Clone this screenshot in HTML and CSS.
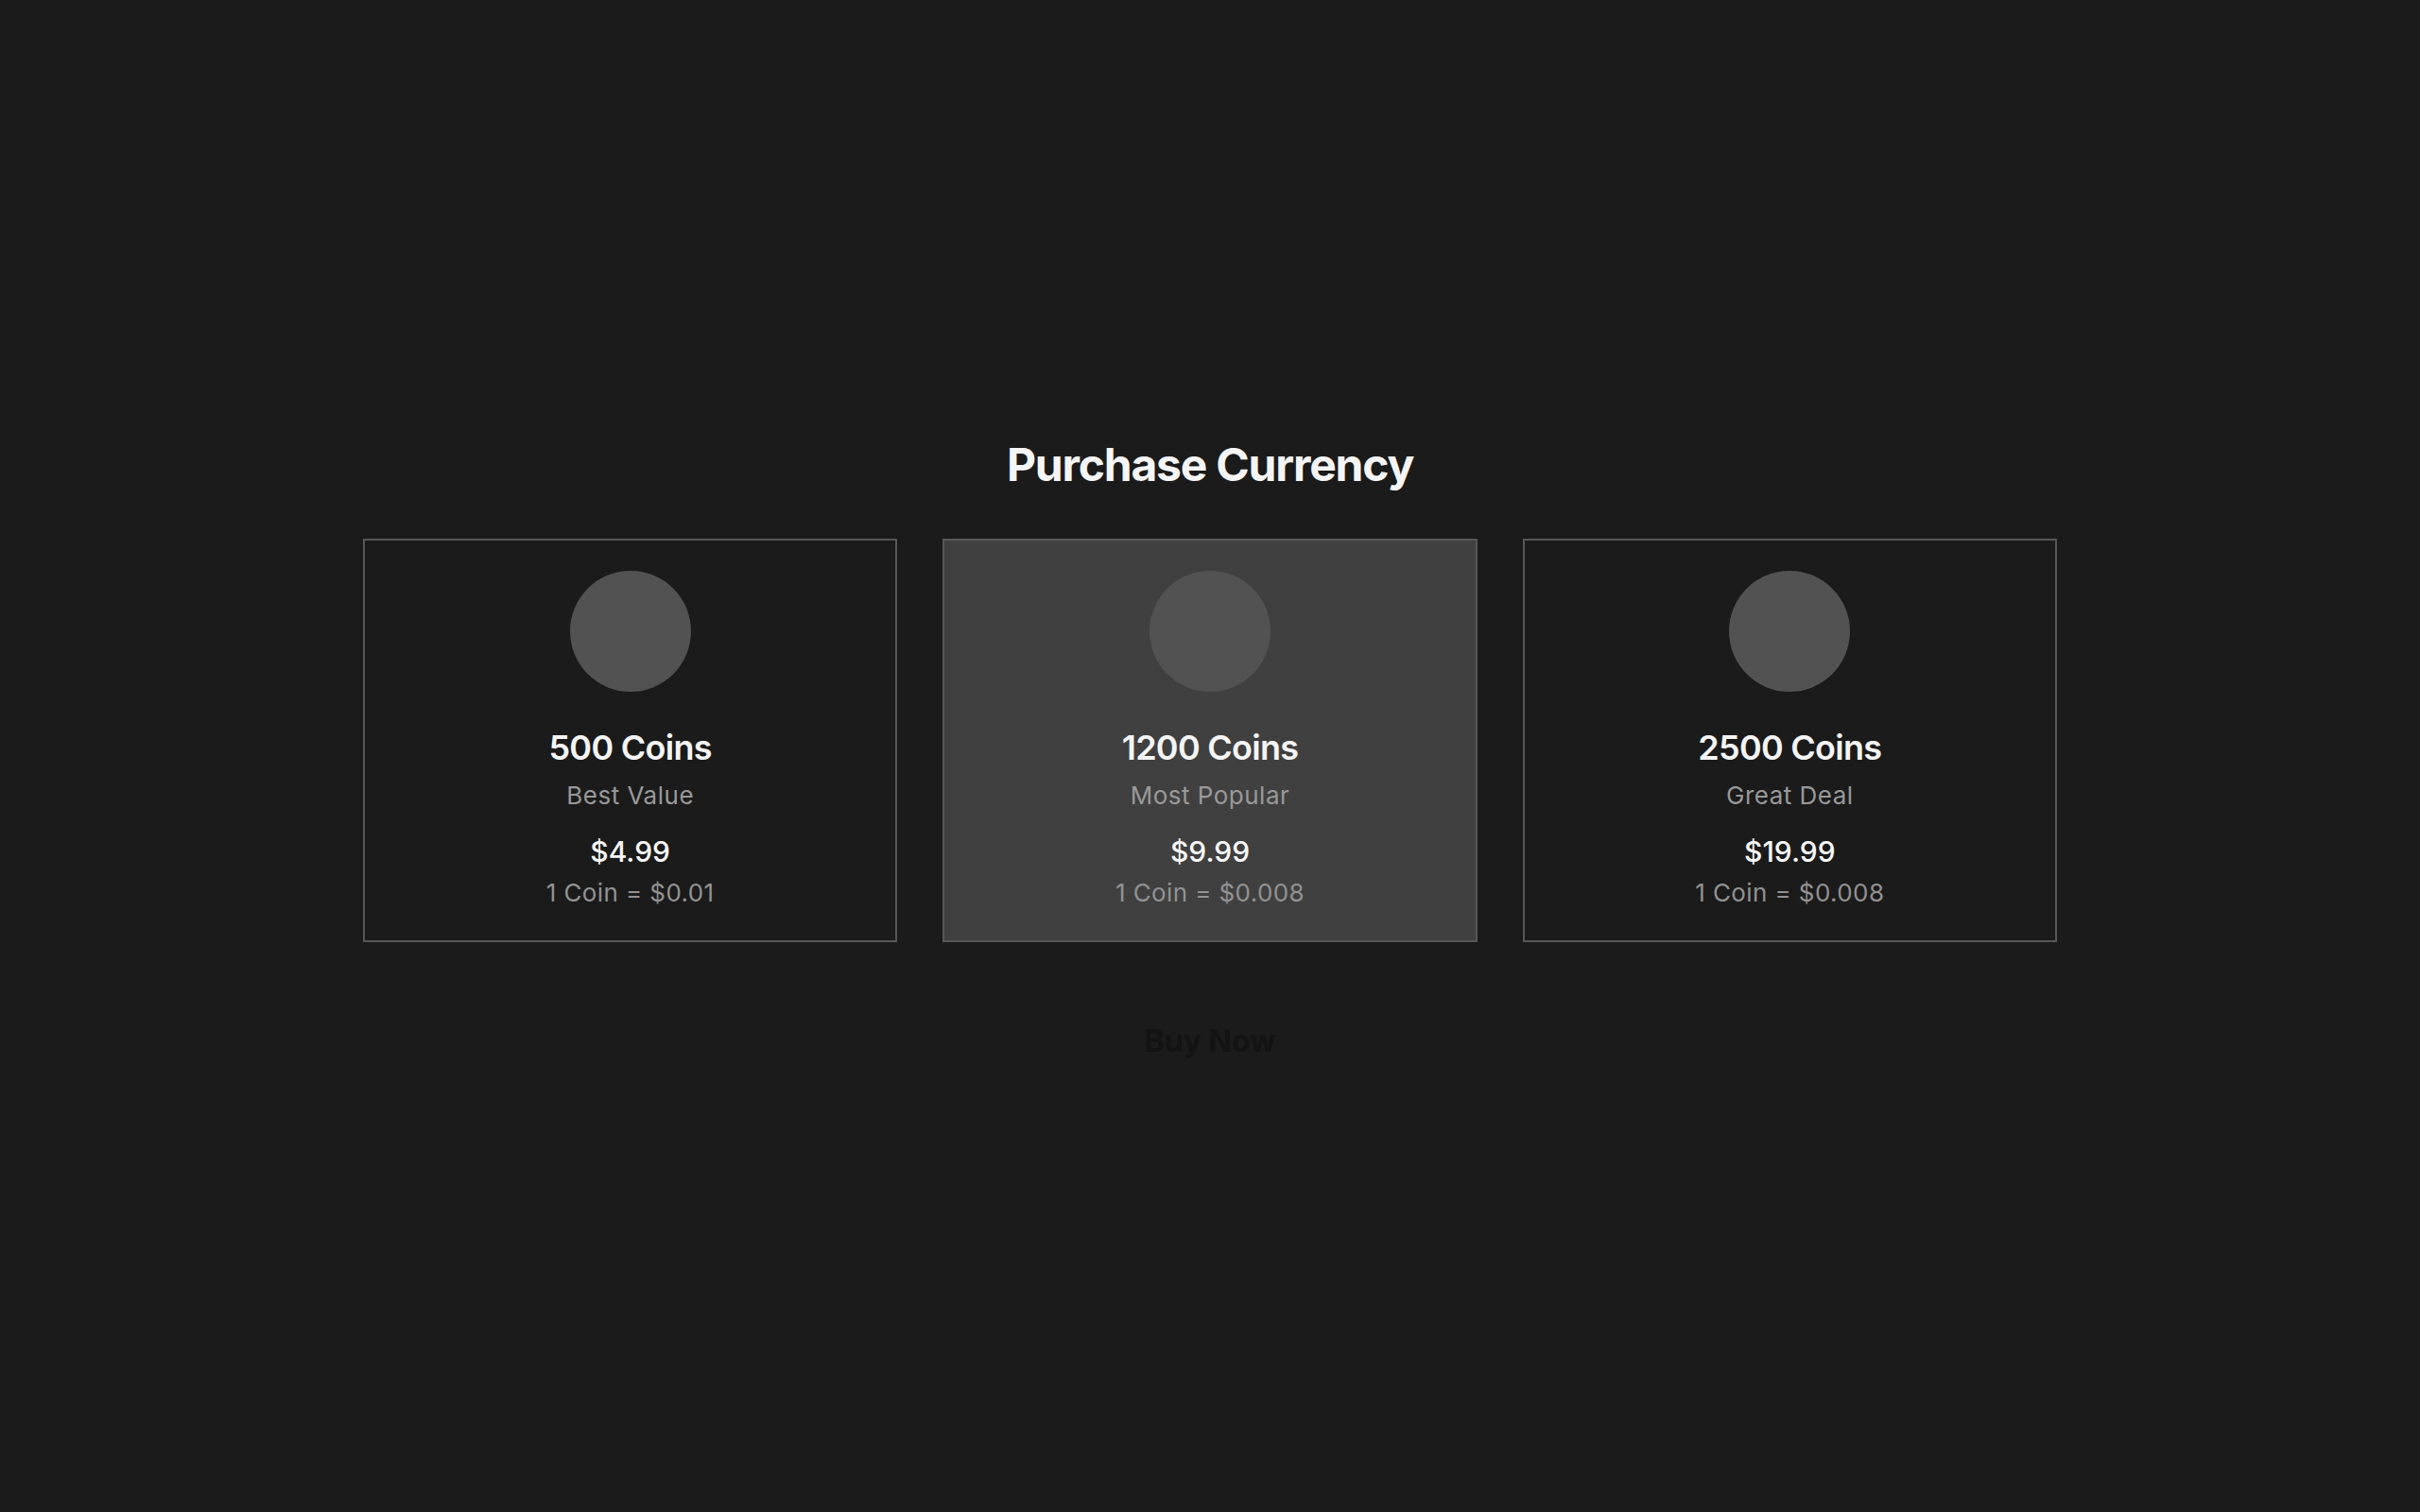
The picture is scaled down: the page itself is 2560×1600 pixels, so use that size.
FILE: index.html
```html
<!DOCTYPE html>
<html lang="en">
<head>
    <meta charset="UTF-8">
    <title>Purchase Currency</title>
    <link rel="stylesheet" href="styles.css">
</head>
<body>
    <main class="shop">
        <h1>Purchase Currency</h1>

        <section class="packs">
            <div class="pack">
                <div class="coin"></div>
                <h3 class="pack-name">500 Coins</h3>
                <p class="pack-tag">Best Value</p>
                <p class="pack-price">$4.99</p>
                <p class="pack-rate">1 Coin = $0.01</p>
            </div>
            <div class="pack selected">
                <div class="coin"></div>
                <h3 class="pack-name">1200 Coins</h3>
                <p class="pack-tag">Most Popular</p>
                <p class="pack-price">$9.99</p>
                <p class="pack-rate">1 Coin = $0.008</p>
            </div>
            <div class="pack">
                <div class="coin"></div>
                <h3 class="pack-name">2500 Coins</h3>
                <p class="pack-tag">Great Deal</p>
                <p class="pack-price">$19.99</p>
                <p class="pack-rate">1 Coin = $0.008</p>
            </div>
        </section>

        <button class="buy">Buy Now</button>
    </main>
</body>
</html>
```

FILE: styles.css
```css
html, body {
    margin: 0;
    padding: 0;
    background-color: #1b1b1b;
    font-family: Inter, "Noto Sans", sans-serif;
    line-height: 1.2;
}

body {
    min-height: 100vh;
    display: flex;
    align-items: center;
    justify-content: center;
}

.shop {
    width: 1792px;
    display: flex;
    flex-direction: column;
    align-items: center;
}

h1 {
    color: #f5f5f5;
    font-size: 48px;
    font-weight: 700;
    letter-spacing: -0.025em;
    margin: 0 0 50px;
}

.packs {
    width: 100%;
    display: grid;
    grid-template-columns: repeat(3, 1fr);
    gap: 48px;
}

.pack {
    border: 2px solid #575757;
    padding: 32px 32px 35px;
    display: flex;
    flex-direction: column;
    align-items: center;
    text-align: center;
}

.pack.selected {
    background-color: #404040;
}

.coin {
    width: 128px;
    height: 128px;
    border-radius: 50%;
    background-color: #525252;
    margin-bottom: 38px;
}

.pack-name {
    color: #f5f5f5;
    font-size: 36px;
    font-weight: 600;
    letter-spacing: -0.02em;
    margin: 0;
}

.pack-tag {
    color: #999;
    font-size: 26px;
    letter-spacing: 0.5px;
    margin: 12px 0 0;
}

.pack-price {
    color: #f7f7f7;
    font-size: 30px;
    font-weight: 500;
    margin: 26px 0 0;
}

.pack-rate {
    color: #929292;
    font-size: 26px;
    letter-spacing: 0.4px;
    margin: 10px 0 0;
}

.buy {
    margin-top: 70px;
    padding: 16px 48px;
    background: transparent;
    border: none;
    color: #131313;
    font-family: inherit;
    font-size: 32px;
    font-weight: 700;
    line-height: 1.2;
    cursor: pointer;
}
```
